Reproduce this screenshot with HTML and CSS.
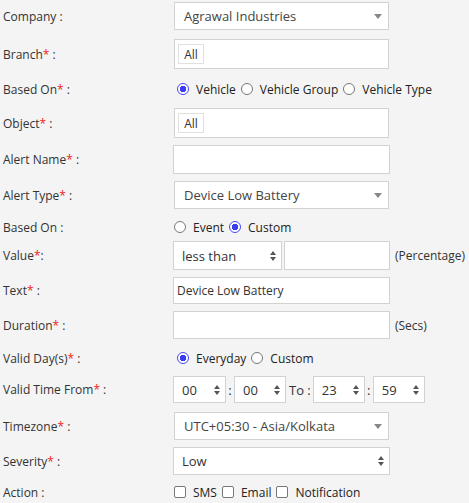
FILE: index.html
```html
<!DOCTYPE html>
<html>
<head>
<meta charset="utf-8">
<link rel="stylesheet" href="styles.css">
</head>
<body>
<form class="form">
  <div class="row r1">
    <span class="label">Company :</span>
    <div class="s2"><span class="s2-text">Agrawal Industries</span><span class="s2-arrow"></span></div>
  </div>
  <div class="row r2">
    <span class="label">Branch<b class="req">*</b> :</span>
    <div class="multi"><span class="tag">All</span></div>
  </div>
  <div class="row r3">
    <span class="label">Based On<b class="req">*</b> :</span>
    <div class="opts indent">
      <span class="radio on"></span><span class="opt">Vehicle</span>
      <span class="radio"></span><span class="opt">Vehicle Group</span>
      <span class="radio"></span><span class="opt">Vehicle Type</span>
    </div>
  </div>
  <div class="row r4">
    <span class="label">Object<b class="req">*</b> :</span>
    <div class="multi"><span class="tag">All</span></div>
  </div>
  <div class="row r5">
    <span class="label">Alert Name<b class="req">*</b> :</span>
    <div class="input h29"></div>
  </div>
  <div class="row r6">
    <span class="label">Alert Type<b class="req">*</b> :</span>
    <div class="s2"><span class="s2-text">Device Low Battery</span><span class="s2-arrow"></span></div>
  </div>
  <div class="row r7">
    <span class="label">Based On :</span>
    <div class="opts">
      <span class="radio"></span><span class="opt">Event</span>
      <span class="radio on"></span><span class="opt">Custom</span>
    </div>
  </div>
  <div class="row r8">
    <span class="label">Value<b class="req">*</b>:</span>
    <div class="nsel w109"><span>less than</span><span class="updown"></span></div>
    <div class="input w106"></div>
    <span class="unit">(Percentage)</span>
  </div>
  <div class="row r9">
    <span class="label">Text<b class="req">*</b> :</span>
    <div class="input h27 txt">Device Low Battery</div>
  </div>
  <div class="row r10">
    <span class="label">Duration<b class="req">*</b> :</span>
    <div class="input"></div>
    <span class="unit">(Secs)</span>
  </div>
  <div class="row r11">
    <span class="label">Valid Day(s)<b class="req">*</b> :</span>
    <div class="opts indent">
      <span class="radio on"></span><span class="opt">Everyday</span>
      <span class="radio"></span><span class="opt">Custom</span>
    </div>
  </div>
  <div class="row r12">
    <span class="label">Valid Time From<b class="req">*</b> :</span>
    <div class="nsel tsel w53"><span>00</span><span class="updown"></span></div>
    <span class="sep">:</span>
    <div class="nsel tsel"><span>00</span><span class="updown"></span></div>
    <span class="to">To :</span>
    <div class="nsel tsel"><span>23</span><span class="updown"></span></div>
    <span class="sep">:</span>
    <div class="nsel tsel"><span>59</span><span class="updown"></span></div>
  </div>
  <div class="row r13">
    <span class="label">Timezone<b class="req">*</b> :</span>
    <div class="s2"><span class="s2-text">UTC+05:30 - Asia/Kolkata</span><span class="s2-arrow"></span></div>
  </div>
  <div class="row r14">
    <span class="label">Severity<b class="req">*</b> :</span>
    <div class="nsel wide"><span>Low</span><span class="updown"></span></div>
  </div>
  <div class="row r15">
    <span class="label">Action :</span>
    <div class="opts">
      <span class="check"></span><span class="opt">SMS</span>
      <span class="check"></span><span class="opt">Email</span>
      <span class="check"></span><span class="opt">Notification</span>
    </div>
  </div>
</form>
</body>
</html>
```
FILE: styles.css
```css
html, body {
  margin: 0;
  padding: 0;
  background: #f4f4f4;
}
body {
  font-family: "Open Sans", "Liberation Sans", sans-serif;
  font-size: 12px;
  color: #333;
  width: 469px;
  height: 503px;
  overflow: hidden;
}
.form {
  padding: 2px 0 0 3px;
}
.row {
  display: flex;
  align-items: center;
}
.label {
  width: 170px;
  flex: none;
  white-space: nowrap;
}
.req {
  color: #ee2222;
  font-weight: normal;
}
.r1 { height: 28px; }
.r2 { height: 30px; margin-top: 9px; }
.r3 { height: 18px; margin-top: 11px; }
.r4 { height: 30px; margin-top: 10px; }
.r5 { height: 29px; margin-top: 7px; }
.r6 { height: 28px; margin-top: 7px; }
.r7 { height: 18px; margin-top: 9px; }
.r8 { height: 29px; margin-top: 5px; }
.r9 { height: 27px; margin-top: 7px; }
.r10 { height: 28px; margin-top: 7px; }
.r11 { height: 18px; margin-top: 10px; }
.r12 { height: 27px; margin-top: 9px; }
.r13 { height: 28px; margin-top: 9px; }
.r14 { height: 28px; margin-top: 7px; }
.r15 { height: 18px; margin-top: 8px; }

/* select2-like */
.s2 {
  box-sizing: border-box;
  margin-left: 1px;
  width: 215px;
  height: 28px;
  background: #fff;
  border: 1px solid #d2d2d2;
  display: flex;
  align-items: center;
  justify-content: space-between;
  padding: 0 6px 0 9px;
  font-size: 13px;
  color: #444;
}
.s2-arrow {
  width: 0;
  height: 0;
  border-left: 4px solid transparent;
  border-right: 4px solid transparent;
  border-top: 5px solid #888;
  margin-top: 1px;
}
.multi {
  box-sizing: border-box;
  margin-left: 1px;
  width: 215px;
  height: 30px;
  background: #fff;
  border: 1px solid #d2d2d2;
  display: flex;
  align-items: center;
  padding-left: 3px;
}
.tag {
  box-sizing: border-box;
  height: 20px;
  width: 26px;
  border: 1px solid #e0e0e0;
  display: flex;
  align-items: center;
  justify-content: center;
  font-size: 12px;
  color: #333;
}
.input {
  box-sizing: border-box;
  width: 217px;
  height: 28px;
  background: #fff;
  border: 1px solid #d2d2d2;
}
.h29 { height: 29px; }
.h27 { height: 27px; }
.txt {
  display: flex;
  align-items: center;
  padding-left: 3px;
  font-size: 12px;
  color: #333;
}
.w106 { width: 106px; margin-left: 2px; height: 29px; }
.unit {
  margin-left: 5px;
  font-size: 12px;
}

/* native selects */
.nsel {
  box-sizing: border-box;
  height: 28px;
  background: #fff;
  border: 1px solid #d2d2d2;
  display: flex;
  align-items: center;
  justify-content: space-between;
  padding: 0 5px 0 8px;
  font-size: 13px;
  color: #333;
  flex: none;
}
.w109 { width: 109px; height: 29px; }
.wide { width: 217px; }
.tsel { width: 52px; height: 27px; }
.w53 { width: 53px; }
.updown {
  display: flex;
  flex-direction: column;
  align-items: center;
  gap: 2px;
}
.updown::before,
.updown::after {
  content: "";
  width: 0;
  height: 0;
  border-left: 3.5px solid transparent;
  border-right: 3.5px solid transparent;
}
.updown::before { border-bottom: 4px solid #555; }
.updown::after { border-top: 4px solid #555; }
.sep {
  width: 8px;
  text-align: center;
  font-size: 13px;
  flex: none;
}
.to {
  margin: 0 2px 0 3px;
  font-size: 13px;
  white-space: nowrap;
  flex: none;
}

/* radios and checks */
.opts {
  display: flex;
  align-items: center;
  font-size: 12px;
  color: #222;
}
.indent { padding-left: 3px; }
.radio {
  box-sizing: border-box;
  width: 12px;
  height: 12px;
  border-radius: 50%;
  border: 1px solid #777;
  background: #fff;
  margin: 0 7px 0 1px;
  flex: none;
}
.radio.on {
  border: 1.5px solid #4646ff;
  background: radial-gradient(circle, #3c3cf5 0 3px, #fff 3.5px);
}
.opt {
  margin-right: 4px;
}
.check {
  box-sizing: border-box;
  width: 12px;
  height: 12px;
  border: 1px solid #777;
  border-radius: 2px;
  background: #fff;
  margin: 0 7px 0 1px;
  flex: none;
}
```
